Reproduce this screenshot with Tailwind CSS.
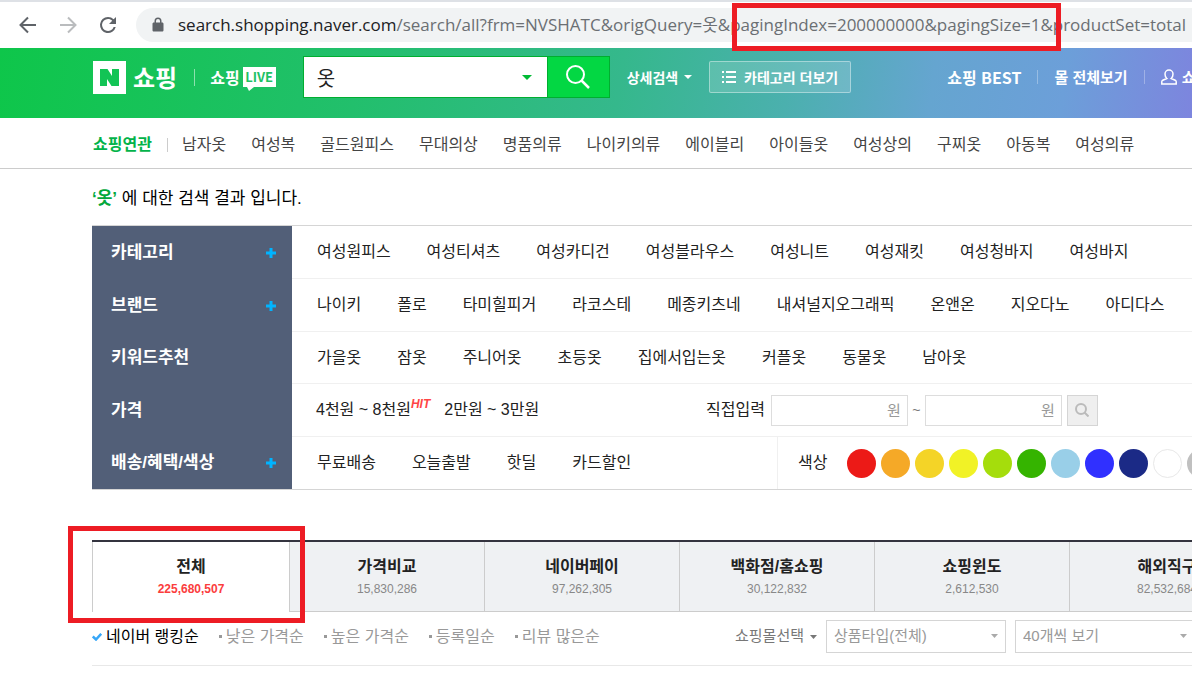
<!DOCTYPE html>
<html lang="ko">

<head>
    <meta charset="UTF-8">
    <meta name="viewport" content="width=device-width, initial-scale=1.0">
    <script src="https://cdn.jsdelivr.net/npm/@tailwindcss/browser@4"></script>
    <title>옷 : 네이버 쇼핑</title>
</head>

<body class="bg-white overflow-x-hidden font-['Liberation_Sans','Noto_Sans_CJK_KR',sans-serif] text-base text-[#222]">
    <!-- browser bar -->
    <div class="relative h-12 border-t-2 border-[#dee1e6] flex items-center gap-4 pl-4 overflow-visible">
        <button type="button" aria-label="뒤로">
            <svg class="size-6" viewBox="0 0 24 24" fill="none" stroke="#5f6368" stroke-width="2"><path d="M20 12H5M12 4.5L4.5 12l7.5 7.5" /></svg>
        </button>
        <button type="button" aria-label="앞으로">
            <svg class="size-6" viewBox="0 0 24 24" fill="none" stroke="#babcbe" stroke-width="2"><path d="M4 12h15M12 4.5l7.5 7.5-7.5 7.5" /></svg>
        </button>
        <button type="button" aria-label="새로고침">
            <svg class="size-6" viewBox="0 0 24 24"><path fill="#5f6368" d="M17.65 6.35A7.96 7.96 0 0 0 12 4a8 8 0 1 0 7.73 10h-2.08A6 6 0 1 1 12 6c1.66 0 3.14.69 4.22 1.78L13 11h7V4z" /></svg>
        </button>
        <div class="flex-1 min-w-0 h-[34px] pl-4 flex items-center gap-[14px] rounded-l-full bg-[#f1f3f4] overflow-hidden">
            <svg class="w-3 h-4 shrink-0" viewBox="0 0 12 16"><path fill="#5f6368" fill-rule="evenodd" d="M2.5 5.500V4a3.500 3.500 0 0 1 7 0v1.500h.7c.7 0 1.300.6 1.300 1.300v6.400c0 .7-.6 1.300-1.300 1.300H1.800c-.7 0-1.300-.6-1.300-1.300V6.800c0-.7.6-1.300 1.300-1.300zM4 5.500h4V4a2 2 0 0 0-4 0z" /></svg>
            <p class="whitespace-nowrap text-[17px] text-[#6b6f73] font-['Open_Sans','Noto_Sans_CJK_KR',sans-serif]"><span class="text-[#202124]">search.shopping.naver.com</span>/search/all?frm=NVSHATC&amp;origQuery=옷&amp;pagingIndex=200000000&amp;pagingSize=1&amp;productSet=total</p>
        </div>
        <div class="absolute left-[732px] top-px w-[329px] h-12 z-10 border-5 border-[#ed1c24]"></div>
    </div>

    <!-- header -->
    <header class="h-[70px] pb-3 pl-[93px] flex items-center whitespace-nowrap overflow-hidden text-white font-['Noto_Sans_CJK_KR',sans-serif] font-bold bg-[linear-gradient(98deg,#0ec64a_0%,#22bf6c_30%,#35b88c_52%,#4bb0ae_66%,#65a5d0_78%,#6c9fd9_89%,#7d85de_100%)]">
        <a href="#" class="shrink-0 flex items-center gap-[7px]">
            <svg class="size-[33px]" viewBox="0 0 33 33"><path fill="#fff" d="M0 0h33v33H0z" /><path fill="#12c455" d="M7 8h7.500l4.500 7V8h7v17h-7.500l-4.500-7v7H7z" /></svg>
            <span class="text-2xl leading-8">쇼핑</span>
        </a>
        <span class="ml-[17px] w-px h-[17px] shrink-0 bg-white/50"></span>
        <a href="#" class="ml-[15px] shrink-0 flex items-center gap-[3px] text-base">쇼핑
            <span class="relative h-5 w-[33px] text-center bg-white text-[#1ec265] text-[13px] leading-5">LIVE
                <svg class="absolute left-1 top-full w-2 h-1" viewBox="0 0 8 4"><path fill="#fff" d="M0 0h7L2 4z" /></svg>
            </span>
        </a>
        <form class="ml-[27px] w-[307px] h-[42px] shrink-0 flex border border-[#00ae30] text-[#222]">
            <div class="relative flex-1 bg-white">
                <input type="text" value="옷" aria-label="검색어" class="w-full h-full pl-[13px] pr-8 text-xl font-normal outline-none">
                <button type="button" aria-label="최근 검색어" class="absolute right-[15px] top-[18px]">
                    <svg class="w-2.5 h-[5px]" viewBox="0 0 10 5"><path fill="#00ba34" d="M0 0h10L5 5z" /></svg>
                </button>
            </div>
            <button type="submit" aria-label="검색" class="w-[62px] flex items-center justify-center bg-[#03d743] border-l border-[#00ae30]">
                <svg class="size-6" viewBox="0 0 24 24" fill="none" stroke="#fff" stroke-width="2"><circle cx="9.500" cy="9.500" r="8.500" /><path d="M15.500 15.500L23 23" stroke-width="2.500" /></svg>
            </button>
        </form>
        <button type="button" class="ml-[17px] shrink-0 flex items-center gap-[6px] text-sm">상세검색
            <svg class="w-2 h-1" viewBox="0 0 8 4"><path fill="#fff" d="M0 0h8L4 4z" /></svg>
        </button>
        <button type="button" class="ml-[17px] w-[142px] h-8 shrink-0 flex items-center justify-center gap-2 text-sm rounded-xs border border-white/40 bg-white/15">
            <svg class="w-3.5 h-3" viewBox="0 0 14 12" fill="#fff"><path d="M0 0h2v2H0zM4 0h10v2H4zM0 5h2v2H0zM4 5h10v2H4zM0 10h2v2H0zM4 10h10v2H4z" /></svg>
            카테고리 더보기
        </button>
        <a href="#" class="ml-24 shrink-0 text-base">쇼핑 BEST</a>
        <span class="mx-4 w-px h-[14px] shrink-0 bg-white/30"></span>
        <a href="#" class="shrink-0 text-[15px]">몰 전체보기</a>
        <span class="mx-4 w-px h-[14px] shrink-0 bg-white/30"></span>
        <a href="#" class="shrink-0 flex items-center gap-[5px] text-[15px]">
            <svg class="w-4 h-4" viewBox="0 0 16 16" fill="none" stroke="#fff" stroke-width="1.500"><path d="M5.800 9.500C4.500 8.500 4 7 4 5a4 4 0 0 1 8 0c0 2-.5 3.500-1.800 4.500l4 1.700c.6.300 1 .8 1 1.500V15H.8v-2.300c0-.7.4-1.200 1-1.500z" /></svg>
            쇼핑MY
        </a>
    </header>

    <!-- related keywords -->
    <nav class="h-[51px] pt-1 pl-[93px] flex items-center gap-[25px] whitespace-nowrap overflow-hidden border-b border-[#ccc] text-[#444]">
        <div class="flex items-center gap-[14px]">
            <strong class="w-[60px] text-[#03b34a]">쇼핑연관</strong>
            <span class="w-px h-[14px] bg-[#ccc]"></span>
            <a href="#">남자옷</a>
        </div>
        <a href="#">여성복</a>
        <a href="#">골드원피스</a>
        <a href="#">무대의상</a>
        <a href="#">명품의류</a>
        <a href="#">나이키의류</a>
        <a href="#">에이블리</a>
        <a href="#">아이들옷</a>
        <a href="#">여성상의</a>
        <a href="#">구찌옷</a>
        <a href="#">아동복</a>
        <a href="#">여성의류</a>
    </nav>

    <main class="pl-[92px]">
        <p class="h-14 pt-[18px] text-[17px] leading-6 text-black"><span class="font-bold text-[#03a83c]">‘옷’</span> 에 대한 검색 결과 입니다.</p>

        <!-- filters -->
        <section class="border-y border-[#d5d5d5] whitespace-nowrap">
            <div class="flex h-[53px]">
                <div class="w-[200px] shrink-0 pl-[19px] pr-4 flex items-center justify-between bg-[#525f78] text-white">
                    <h2 class="text-[17px] font-bold">카테고리</h2>
                    <button type="button" aria-label="카테고리 더보기"><svg class="size-2.5" viewBox="0 0 10 10"><path fill="#00b4ff" d="M3.500 0h3v3.500H10v3H6.500V10h-3V6.500H0v-3h3.500z" /></svg></button>
                </div>
                <div class="flex-1 min-w-0 pl-[25px] flex items-center gap-9 overflow-hidden border-b border-[#f0f0f0]">
                    <a href="#">여성원피스</a>
                    <a href="#">여성티셔츠</a>
                    <a href="#">여성카디건</a>
                    <a href="#">여성블라우스</a>
                    <a href="#">여성니트</a>
                    <a href="#">여성재킷</a>
                    <a href="#">여성청바지</a>
                    <a href="#">여성바지</a>
                </div>
            </div>
            <div class="flex h-[53px]">
                <div class="w-[200px] shrink-0 pl-[19px] pr-4 flex items-center justify-between bg-[#525f78] text-white">
                    <h2 class="text-[17px] font-bold">브랜드</h2>
                    <button type="button" aria-label="브랜드 더보기"><svg class="size-2.5" viewBox="0 0 10 10"><path fill="#00b4ff" d="M3.500 0h3v3.500H10v3H6.500V10h-3V6.500H0v-3h3.500z" /></svg></button>
                </div>
                <div class="flex-1 min-w-0 pl-[25px] flex items-center gap-9 overflow-hidden border-b border-[#f0f0f0]">
                    <a href="#">나이키</a>
                    <a href="#">폴로</a>
                    <a href="#">타미힐피거</a>
                    <a href="#">라코스테</a>
                    <a href="#">메종키츠네</a>
                    <a href="#">내셔널지오그래픽</a>
                    <a href="#">온앤온</a>
                    <a href="#">지오다노</a>
                    <a href="#">아디다스</a>
                </div>
            </div>
            <div class="flex h-[52px]">
                <div class="w-[200px] shrink-0 pl-[19px] flex items-center bg-[#525f78] text-white">
                    <h2 class="text-[17px] font-bold">키워드추천</h2>
                </div>
                <div class="flex-1 min-w-0 pl-[25px] flex items-center gap-9 overflow-hidden border-b border-[#f0f0f0]">
                    <a href="#">가을옷</a>
                    <a href="#">잠옷</a>
                    <a href="#">주니어옷</a>
                    <a href="#">초등옷</a>
                    <a href="#">집에서입는옷</a>
                    <a href="#">커플옷</a>
                    <a href="#">동물옷</a>
                    <a href="#">남아옷</a>
                </div>
            </div>
            <div class="flex h-[53px]">
                <div class="w-[200px] shrink-0 pl-[19px] flex items-center bg-[#525f78] text-white">
                    <h2 class="text-[17px] font-bold">가격</h2>
                </div>
                <div class="flex-1 min-w-0 pl-6 flex items-center overflow-hidden border-b border-[#f0f0f0]">
                    <div class="w-[390px] shrink-0 flex items-center gap-[14px]">
                        <a href="#" class="flex">4천원 ~ 8천원<em class="text-xs leading-3 font-bold text-[#ff4545]">HIT</em></a>
                        <a href="#">2만원 ~ 3만원</a>
                    </div>
                    <form class="flex items-center">
                        <label for="minPrice" class="mr-[6px]">직접입력</label>
                        <input type="text" id="minPrice" placeholder="원"
                            class="w-[137px] h-[31px] pr-1.5 text-right text-[15px] border border-[#ddd] placeholder:text-[#999]">
                        <span class="w-[17px] text-center text-sm text-[#777]">~</span>
                        <input type="text" id="maxPrice" placeholder="원" aria-label="최고 가격"
                            class="w-[137px] h-[31px] pr-1.5 text-right text-[15px] border border-[#ddd] placeholder:text-[#999]">
                        <button type="submit" aria-label="가격 검색" class="ml-[5px] size-[31px] flex items-center justify-center border border-[#d5d5d5] bg-[#efefef]">
                            <svg class="size-3.5" viewBox="0 0 14 14" fill="none" stroke="#bbb" stroke-width="2"><circle cx="6" cy="6" r="5" /><path d="M9.500 9.500L13.500 13.500" /></svg>
                        </button>
                    </form>
                </div>
            </div>
            <div class="flex h-[52px]">
                <div class="w-[200px] shrink-0 pl-[19px] pr-4 flex items-center justify-between bg-[#525f78] text-white">
                    <h2 class="text-[17px] font-bold">배송/혜택/색상</h2>
                    <button type="button" aria-label="배송/혜택/색상 더보기"><svg class="size-2.5" viewBox="0 0 10 10"><path fill="#00b4ff" d="M3.500 0h3v3.500H10v3H6.500V10h-3V6.500H0v-3h3.500z" /></svg></button>
                </div>
                <div class="flex-1 min-w-0 flex overflow-hidden">
                    <div class="w-[485px] shrink-0 pl-[25px] flex items-center gap-9">
                        <a href="#">무료배송</a>
                        <a href="#">오늘출발</a>
                        <a href="#">핫딜</a>
                        <a href="#">카드할인</a>
                    </div>
                    <div class="pl-5 flex items-center gap-[5px] border-l border-[#f0f0f0]">
                        <span class="mr-[15px]">색상</span>
                        <button type="button" aria-label="빨강" class="size-[29px] shrink-0 rounded-full bg-[#ec1a17]"></button>
                        <button type="button" aria-label="주황" class="size-[29px] shrink-0 rounded-full bg-[#f5a927]"></button>
                        <button type="button" aria-label="진노랑" class="size-[29px] shrink-0 rounded-full bg-[#f4d427]"></button>
                        <button type="button" aria-label="노랑" class="size-[29px] shrink-0 rounded-full bg-[#f1f226]"></button>
                        <button type="button" aria-label="연두" class="size-[29px] shrink-0 rounded-full bg-[#a5dd0c]"></button>
                        <button type="button" aria-label="초록" class="size-[29px] shrink-0 rounded-full bg-[#35b400]"></button>
                        <button type="button" aria-label="하늘" class="size-[29px] shrink-0 rounded-full bg-[#99cfe8]"></button>
                        <button type="button" aria-label="파랑" class="size-[29px] shrink-0 rounded-full bg-[#3030ff]"></button>
                        <button type="button" aria-label="남색" class="size-[29px] shrink-0 rounded-full bg-[#1b2a86]"></button>
                        <button type="button" aria-label="흰색" class="size-[29px] shrink-0 rounded-full border border-[#e8e8e8] bg-white"></button>
                        <button type="button" aria-label="회색" class="size-[29px] shrink-0 rounded-full bg-[#c0c0c0]"></button>
                    </div>
                </div>
            </div>
        </section>

        <!-- tabs -->
        <div class="relative mt-[50px]">
            <ul class="flex overflow-hidden border-t-2 border-[#34343f] text-center whitespace-nowrap">
                <li class="w-[197px] h-[70px] shrink-0 border-l border-[#ccc]">
                    <a href="#" class="block pt-[13px]"><strong class="block leading-6">전체</strong><b class="block text-xs leading-5 text-[#fb3d3d]">225,680,507</b></a>
                </li>
                <li class="w-[195px] h-[70px] shrink-0 border-l border-b border-[#ccc] bg-[#eff1f3]">
                    <a href="#" class="block pt-[13px]"><strong class="block leading-6">가격비교</strong><span class="block text-xs leading-5 text-[#888]">15,830,286</span></a>
                </li>
                <li class="w-[195px] h-[70px] shrink-0 border-l border-b border-[#ccc] bg-[#eff1f3]">
                    <a href="#" class="block pt-[13px]"><strong class="block leading-6">네이버페이</strong><span class="block text-xs leading-5 text-[#888]">97,262,305</span></a>
                </li>
                <li class="w-[195px] h-[70px] shrink-0 border-l border-b border-[#ccc] bg-[#eff1f3]">
                    <a href="#" class="block pt-[13px]"><strong class="block leading-6">백화점/홈쇼핑</strong><span class="block text-xs leading-5 text-[#888]">30,122,832</span></a>
                </li>
                <li class="w-[195px] h-[70px] shrink-0 border-l border-b border-[#ccc] bg-[#eff1f3]">
                    <a href="#" class="block pt-[13px]"><strong class="block leading-6">쇼핑윈도</strong><span class="block text-xs leading-5 text-[#888]">2,612,530</span></a>
                </li>
                <li class="w-[195px] h-[70px] shrink-0 border-l border-b border-[#ccc] bg-[#eff1f3]">
                    <a href="#" class="block pt-[13px]"><strong class="block leading-6">해외직구</strong><span class="block text-xs leading-5 text-[#888]">82,532,684</span></a>
                </li>
            </ul>
            <div class="absolute -left-6 -top-[14px] w-[237px] h-[97px] border-5 border-[#ed1c24]"></div>
        </div>

        <!-- sorting -->
        <div class="h-[54px] pb-1 flex items-center whitespace-nowrap overflow-hidden border-b border-[#e8e8e8] text-[#999]">
            <div class="w-[643px] shrink-0 flex items-center gap-5">
                <a href="#" class="flex items-center gap-1 text-black">
                    <svg class="w-2.5 h-2" viewBox="0 0 10 8" fill="none" stroke="#37a7f8" stroke-width="2.500"><path d="M.8 3.500L4 6.500L9.200.8" /></svg>
                    네이버 랭킹순
                </a>
                <a href="#" class="flex items-center gap-1 before:size-[3px] before:bg-[#999]">낮은 가격순</a>
                <a href="#" class="flex items-center gap-1 before:size-[3px] before:bg-[#999]">높은 가격순</a>
                <a href="#" class="flex items-center gap-1 before:size-[3px] before:bg-[#999]">등록일순</a>
                <a href="#" class="flex items-center gap-1 before:size-[3px] before:bg-[#999]">리뷰 많은순</a>
            </div>
            <button type="button" class="shrink-0 flex items-center gap-[6px] text-[15px] text-[#777]">쇼핑몰선택
                <svg class="w-[7px] h-1" viewBox="0 0 7 4"><path fill="#777" d="M0 0h7L3.500 4z" /></svg>
            </button>
            <div class="relative ml-[9px] w-[180px] shrink-0">
                <select aria-label="상품타입" class="block w-full h-[33px] pl-[7px] pr-6 appearance-none text-[15px] border border-[#d5d5d5] bg-white">
                    <option>상품타입(전체)</option>
                </select>
                <svg class="absolute right-2 top-[14px] w-[7px] h-1" viewBox="0 0 7 4"><path fill="#aaa" d="M0 0h7L3.500 4z" /></svg>
            </div>
            <div class="relative ml-[9px] w-[180px] shrink-0">
                <select aria-label="보기 개수" class="block w-full h-[33px] pl-[7px] pr-6 appearance-none text-[15px] border border-[#d5d5d5] bg-white">
                    <option>40개씩 보기</option>
                </select>
                <svg class="absolute right-2 top-[14px] w-[7px] h-1" viewBox="0 0 7 4"><path fill="#aaa" d="M0 0h7L3.500 4z" /></svg>
            </div>
        </div>
    </main>
</body>

</html>
